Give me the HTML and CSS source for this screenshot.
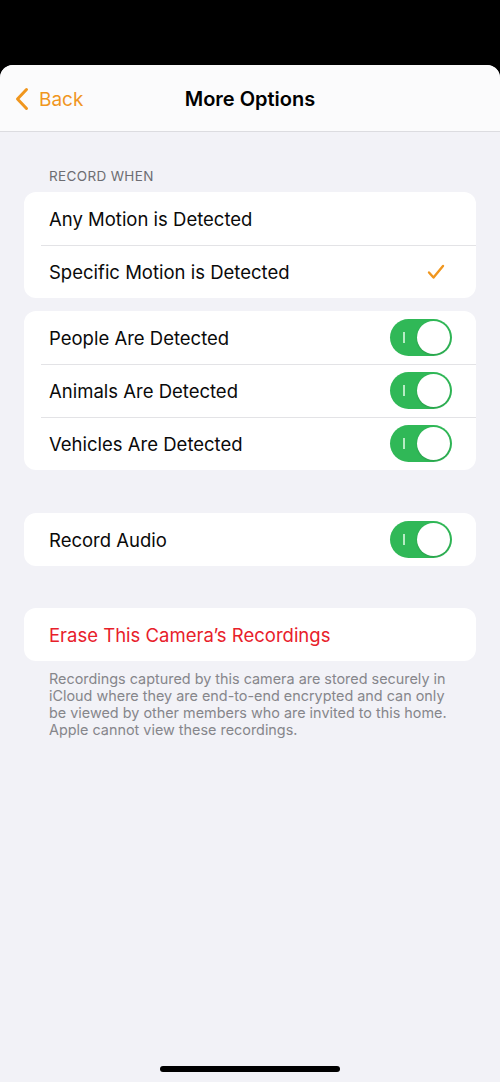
FILE: index.html
```html
<!DOCTYPE html>
<html>
<head>
<meta charset="utf-8">
<link rel="stylesheet" href="styles.css">
</head>
<body>
<div class="sheet">
  <header class="nav">
    <div class="back">
      <svg class="chev" width="14" height="24" viewBox="0 0 14 24"><path d="M11.5 2.5 L2.5 12 L11.5 21.5" fill="none" stroke="#f0961e" stroke-width="3" stroke-linecap="round" stroke-linejoin="round"/></svg>
      <span>Back</span>
    </div>
    <div class="title">More Options</div>
    <div></div>
  </header>
  <main class="content">
    <div class="section-head">RECORD WHEN</div>
    <div class="card">
      <div class="row"><span>Any Motion is Detected</span></div>
      <div class="row"><span>Specific Motion is Detected</span>
        <svg class="check" width="18" height="16" viewBox="0 0 18 16"><path d="M2 8.5 L6.5 13.5 L16 2" fill="none" stroke="#f0961e" stroke-width="2.4" stroke-linecap="round" stroke-linejoin="round"/></svg>
      </div>
    </div>
    <div class="card gap-s">
      <div class="row"><span>People Are Detected</span><span class="toggle"><i></i><b></b></span></div>
      <div class="row"><span>Animals Are Detected</span><span class="toggle"><i></i><b></b></span></div>
      <div class="row"><span>Vehicles Are Detected</span><span class="toggle"><i></i><b></b></span></div>
    </div>
    <div class="card gap-l">
      <div class="row"><span>Record Audio</span><span class="toggle"><i></i><b></b></span></div>
    </div>
    <div class="card gap-l2">
      <div class="row red"><span>Erase This Camera’s Recordings</span></div>
    </div>
    <p class="footer">Recordings captured by this camera are stored securely in iCloud where they are end-to-end encrypted and can only be viewed by other members who are invited to this home. Apple cannot view these recordings.</p>
  </main>
  <div class="home-bar"></div>
</div>
</body>
</html>
```
FILE: styles.css
```css
* { box-sizing: border-box; }
html, body { margin: 0; padding: 0; }
body {
  background: #000;
  font-family: Inter, "Noto Sans", "Liberation Sans", sans-serif;
  width: 500px;
  height: 1082px;
  overflow: hidden;
}
.sheet {
  margin-top: 65px;
  height: 1017px;
  background: #f2f2f7;
  border-radius: 13px 13px 0 0;
  overflow: hidden;
  display: flex;
  flex-direction: column;
}
.nav {
  height: 67px;
  flex: none;
  background: #fbfbfc;
  border-bottom: 1px solid #dcdce0;
  display: grid;
  grid-template-columns: 1fr auto 1fr;
  align-items: center;
  padding-top: 2px;
}
.back {
  display: flex;
  align-items: center;
  gap: 10px;
  padding-left: 15px;
  color: #f0961e;
  font-size: 19px;
}
.title {
  font-size: 20px;
  font-weight: 600;
  color: #000;
}
.content {
  flex: 1;
  padding: 36px 24px 0;
}
.section-head {
  font-size: 13.5px;
  line-height: 16px;
  color: #6d6d72;
  padding-left: 25px;
  margin-bottom: 8px;
  letter-spacing: 0.35px;
}
.card {
  background: #fff;
  border-radius: 12px;
  overflow: hidden;
}
.gap-s { margin-top: 13px; }
.gap-l { margin-top: 43px; }
.gap-l2 { margin-top: 42px; }
.row {
  height: 53px;
  display: flex;
  align-items: center;
  justify-content: space-between;
  padding: 1px 24px 0 25px;
  font-size: 18.5px;
  color: #0a0a0a;
  position: relative;
}
.row + .row::before {
  content: "";
  position: absolute;
  top: 0;
  left: 17px;
  right: 0;
  height: 1px;
  background: #e3e3e6;
}
.row.red { color: #e8202a; }
.check { margin-right: 7px; }
.toggle {
  width: 62px;
  height: 37px;
  border-radius: 19px;
  background: #30b857;
  position: relative;
  flex: none;
  margin-top: -1px;
}
.toggle i {
  position: absolute;
  left: 13px;
  top: 13px;
  width: 1.5px;
  height: 11px;
  background: #b7ecc4;
}
.toggle b {
  position: absolute;
  right: 2px;
  top: 2px;
  width: 33px;
  height: 33px;
  border-radius: 50%;
  background: #fff;
  box-shadow: 0 1px 2px rgba(0,0,0,0.15);
}
.footer {
  margin: 9px 0 0;
  padding: 0 20px 0 25px;
  font-size: 14.4px;
  line-height: 17px;
  color: #86868b;
}
.home-bar {
  flex: none;
  align-self: center;
  width: 180px;
  height: 6px;
  border-radius: 3px;
  background: #000;
  margin-bottom: 10px;
}
```
